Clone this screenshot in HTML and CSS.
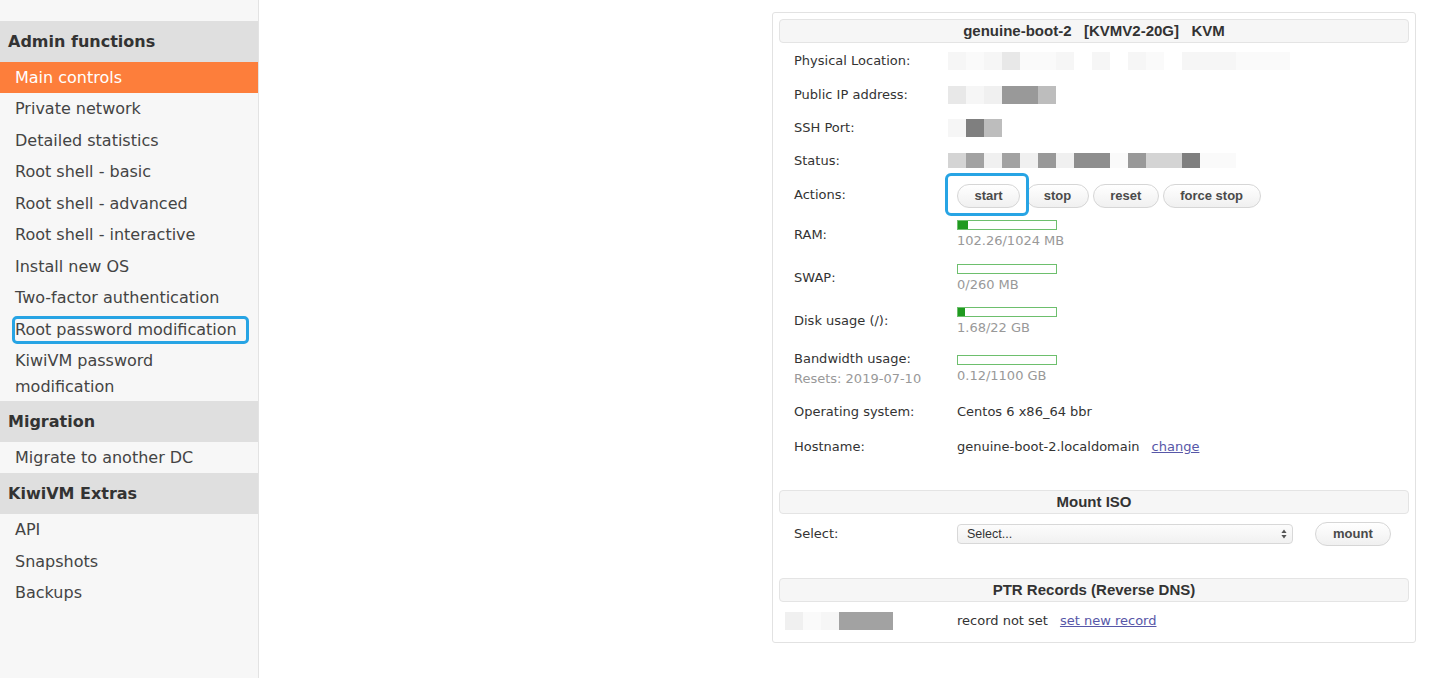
FILE: index.html
```html
<!DOCTYPE html>
<html lang="en">
<head>
<meta charset="utf-8">
<title>KiwiVM - Main controls</title>
<link rel="stylesheet" href="styles.css">
</head>
<body>
<div class="page">
  <aside class="sidebar">
    <div class="side-head">Admin functions</div>
    <ul class="side-list">
      <li class="active">Main controls</li>
      <li>Private network</li>
      <li>Detailed statistics</li>
      <li>Root shell - basic</li>
      <li>Root shell - advanced</li>
      <li>Root shell - interactive</li>
      <li>Install new OS</li>
      <li>Two-factor authentication</li>
      <li class="marked">Root password modification</li>
      <li>KiwiVM password modification</li>
    </ul>
    <div class="side-head">Migration</div>
    <ul class="side-list">
      <li>Migrate to another DC</li>
    </ul>
    <div class="side-head">KiwiVM Extras</div>
    <ul class="side-list">
      <li>API</li>
      <li>Snapshots</li>
      <li>Backups</li>
    </ul>
  </aside>

  <main class="main">
    <section class="panel">
      <div class="bar-head">genuine-boot-2&nbsp;&nbsp;&nbsp;[KVMV2-20G]&nbsp;&nbsp;&nbsp;KVM</div>

      <div class="info-grid">
        <div class="lbl">Physical Location:</div>
        <div class="val"><span class="pix pix-loc"><i class="c1"></i><i class="c0"></i><i class="c1"></i><i class="c3"></i><i class="c0"></i><i class="c0"></i><i class="c1"></i><i class="cw"></i><i class="c1"></i><i class="cw"></i><i class="c1"></i><i class="c0"></i><i class="cw"></i><i class="c1 w3"></i><i class="c0 w3"></i></span></div>

        <div class="lbl">Public IP address:</div>
        <div class="val"><span class="pix"><i class="c3"></i><i class="c1"></i><i class="c2"></i><i class="c7 w2"></i><i class="c5"></i></span></div>

        <div class="lbl">SSH Port:</div>
        <div class="val"><span class="pix"><i class="c1"></i><i class="c9"></i><i class="c5"></i></span></div>

        <div class="lbl">Status:</div>
        <div class="val"><span class="pix pix-status"><i class="c4"></i><i class="c6"></i><i class="c2"></i><i class="c6"></i><i class="c2"></i><i class="c7"></i><i class="c2"></i><i class="c8 w2"></i><i class="c0"></i><i class="c7"></i><i class="c4 w2"></i><i class="c9"></i><i class="c0 w2"></i></span></div>

        <div class="lbl">Actions:</div>
        <div class="val actions">
          <span class="focus-wrap"><button class="btn">start</button></span>
          <button class="btn">stop</button>
          <button class="btn">reset</button>
          <button class="btn">force stop</button>
        </div>

        <div class="lbl">RAM:</div>
        <div class="val meter-cell">
          <div class="meter"><div class="meter-fill" style="width:10%"></div></div>
          <div class="muted">102.26/1024 MB</div>
        </div>

        <div class="lbl">SWAP:</div>
        <div class="val meter-cell">
          <div class="meter"><div class="meter-fill" style="width:0%"></div></div>
          <div class="muted">0/260 MB</div>
        </div>

        <div class="lbl">Disk usage (/):</div>
        <div class="val meter-cell">
          <div class="meter"><div class="meter-fill" style="width:7.6%"></div></div>
          <div class="muted">1.68/22 GB</div>
        </div>

        <div class="lbl">Bandwidth usage:<br><span class="muted">Resets: 2019-07-10</span></div>
        <div class="val meter-cell">
          <div class="meter"><div class="meter-fill" style="width:0%"></div></div>
          <div class="muted">0.12/1100 GB</div>
        </div>

        <div class="lbl">Operating system:</div>
        <div class="val">Centos 6 x86_64 bbr</div>

        <div class="lbl">Hostname:</div>
        <div class="val">genuine-boot-2.localdomain<a class="link gap" href="#">change</a></div>
      </div>

      <div class="bar-head section">Mount ISO</div>
      <div class="form-row">
        <div class="lbl">Select:</div>
        <div class="val select-cell">
          <div class="select">
            <span>Select...</span>
            <svg class="arrows" width="6" height="10" viewBox="0 0 6 10"><path d="M3 0.5 L5.6 4 H0.4 Z M3 9.5 L5.6 6 H0.4 Z" fill="#555"/></svg>
          </div>
          <button class="btn mount">mount</button>
        </div>
      </div>

      <div class="bar-head section2">PTR Records (Reverse DNS)</div>
      <div class="form-row ptr-row">
        <div class="lbl ptr-lbl"><span class="pix"><i class="c2"></i><i class="c0"></i><i class="c1"></i><i class="c6 w3"></i></span></div>
        <div class="val">record not set<a class="link gap" href="#">set new record</a></div>
      </div>
    </section>
  </main>
</div>
</body>
</html>
```

FILE: styles.css
```css
* { box-sizing: border-box; }

html, body {
  margin: 0;
  padding: 0;
  background: #ffffff;
}

body {
  font-family: "DejaVu Sans", Verdana, sans-serif;
  color: #333;
}

.page {
  display: flex;
  min-height: 678px;
}

/* ---------- sidebar ---------- */
.sidebar {
  width: 259px;
  flex: 0 0 259px;
  background: #f7f7f7;
  border-right: 1px solid #e3e3e3;
  padding-top: 21px;
  min-height: 678px;
}

.side-head {
  height: 40.5px;
  line-height: 40.5px;
  padding: 1px 0 0 8px;
  background: #dfdfdf;
  font-weight: bold;
  font-size: 16px;
  color: #333;
}

.side-list {
  list-style: none;
  margin: 0;
  padding: 0;
}

.side-list li {
  position: relative;
  padding: 3.5px 15px 2.5px;
  line-height: 25.45px;
  font-size: 16px;
  color: #444;
}

.side-list li.active {
  background: #fd7e3b;
  color: #fff;
}

.side-list li.marked::after {
  content: "";
  position: absolute;
  top: 3px;
  bottom: 1px;
  left: 12px;
  right: 9px;
  border: 3px solid #27a4e4;
  border-radius: 5px;
}

/* ---------- main ---------- */
.main {
  flex: 1;
  display: flex;
  justify-content: flex-end;
  align-items: flex-start;
  padding: 12px 32px 0 0;
}

.panel {
  width: 644px;
  border: 1px solid #e2e2e2;
  border-radius: 3px;
  padding: 6px 6px 3px;
  background: #fff;
}

.bar-head {
  height: 24px;
  line-height: 22px;
  border: 1px solid #e4e4e4;
  border-radius: 4px;
  background: #f6f6f6;
  text-align: center;
  font-family: "Liberation Sans", Arial, sans-serif;
  font-weight: bold;
  font-size: 15px;
  color: #333;
}

.bar-head.section { margin-top: 25px; }
.bar-head.section2 { margin-top: 24px; }

.info-grid {
  display: grid;
  grid-template-columns: 178px 1fr;
  grid-template-rows: 35px 33px 33px 33px 35px 45px 42px 44px 52px 34px 36px;
  font-size: 13px;
}

.lbl {
  padding-left: 15px;
  align-self: center;
  line-height: 20px;
  font-size: 13px;
  color: #333;
}

.val {
  align-self: center;
  line-height: 20px;
  font-size: 13px;
  color: #333;
}

.muted { color: #999; }

/* pixelated (blurred) placeholders */
.pix {
  display: flex;
  height: 18px;
  margin-left: -9px;
}
.pix-status { height: 15px; }
.pix i {
  display: block;
  width: 18px;
  height: 100%;
}
.pix i.w2 { width: 36px; }
.pix i.w3 { width: 54px; }
.cw { background: #ffffff; }
.c0 { background: #fafafa; }
.c1 { background: #f6f6f6; }
.c2 { background: #f0f0f0; }
.c3 { background: #e8e8e8; }
.c4 { background: #d4d4d4; }
.c5 { background: #bdbdbd; }
.c6 { background: #a2a2a2; }
.c7 { background: #999999; }
.c8 { background: #8e8e8e; }
.c9 { background: #7f7f7f; }

/* buttons */
.actions {
  display: flex;
  align-items: center;
  gap: 4px;
  padding-top: 3px;
}

.btn {
  height: 24px;
  padding: 0 16.5px;
  border: 1px solid #d6d6d6;
  border-radius: 12px;
  background: linear-gradient(#ffffff, #f0f0f0);
  font-family: "Liberation Sans", Arial, sans-serif;
  font-weight: bold;
  font-size: 13px;
  color: #4a4a4a;
  line-height: 22px;
  cursor: pointer;
}

.focus-wrap {
  position: relative;
  display: inline-flex;
  margin-right: 2px;
}

.focus-wrap::after {
  content: "";
  position: absolute;
  top: -11px;
  bottom: -8px;
  left: -12px;
  right: -9px;
  border: 3px solid #27a4e4;
  border-radius: 6px;
}

/* meters */
.meter-cell {
  display: flex;
  flex-direction: column;
  padding-top: 2px;
}

.meter {
  width: 100px;
  height: 10px;
  border: 1px solid #6dbf6d;
  background: #fff;
  margin-bottom: 1px;
}

.meter-fill {
  height: 100%;
  background: #1f9a1f;
}

.meter-cell .muted { line-height: 20px; }

.link {
  color: #5757a8;
  text-decoration: underline;
}
.gap { margin-left: 12px; }

/* forms */
.form-row {
  display: grid;
  grid-template-columns: 178px 1fr;
  height: 40px;
  align-items: center;
}

.select-cell {
  display: flex;
  align-items: center;
}

.select {
  width: 336px;
  height: 20px;
  border: 1px solid #d8d8d8;
  border-radius: 4px;
  background: linear-gradient(#fcfcfc, #f1f1f1);
  display: flex;
  align-items: center;
  justify-content: space-between;
  padding: 0 5px 0 9px;
  font-family: "Liberation Sans", Arial, sans-serif;
  font-size: 12.5px;
  color: #333;
}

.mount {
  margin-left: 22px;
  padding: 0 17px;
}

.ptr-row { height: 37px; }
.ptr-lbl { padding-left: 15px; }
.ptr-lbl .pix { margin-left: -9px; }
```
